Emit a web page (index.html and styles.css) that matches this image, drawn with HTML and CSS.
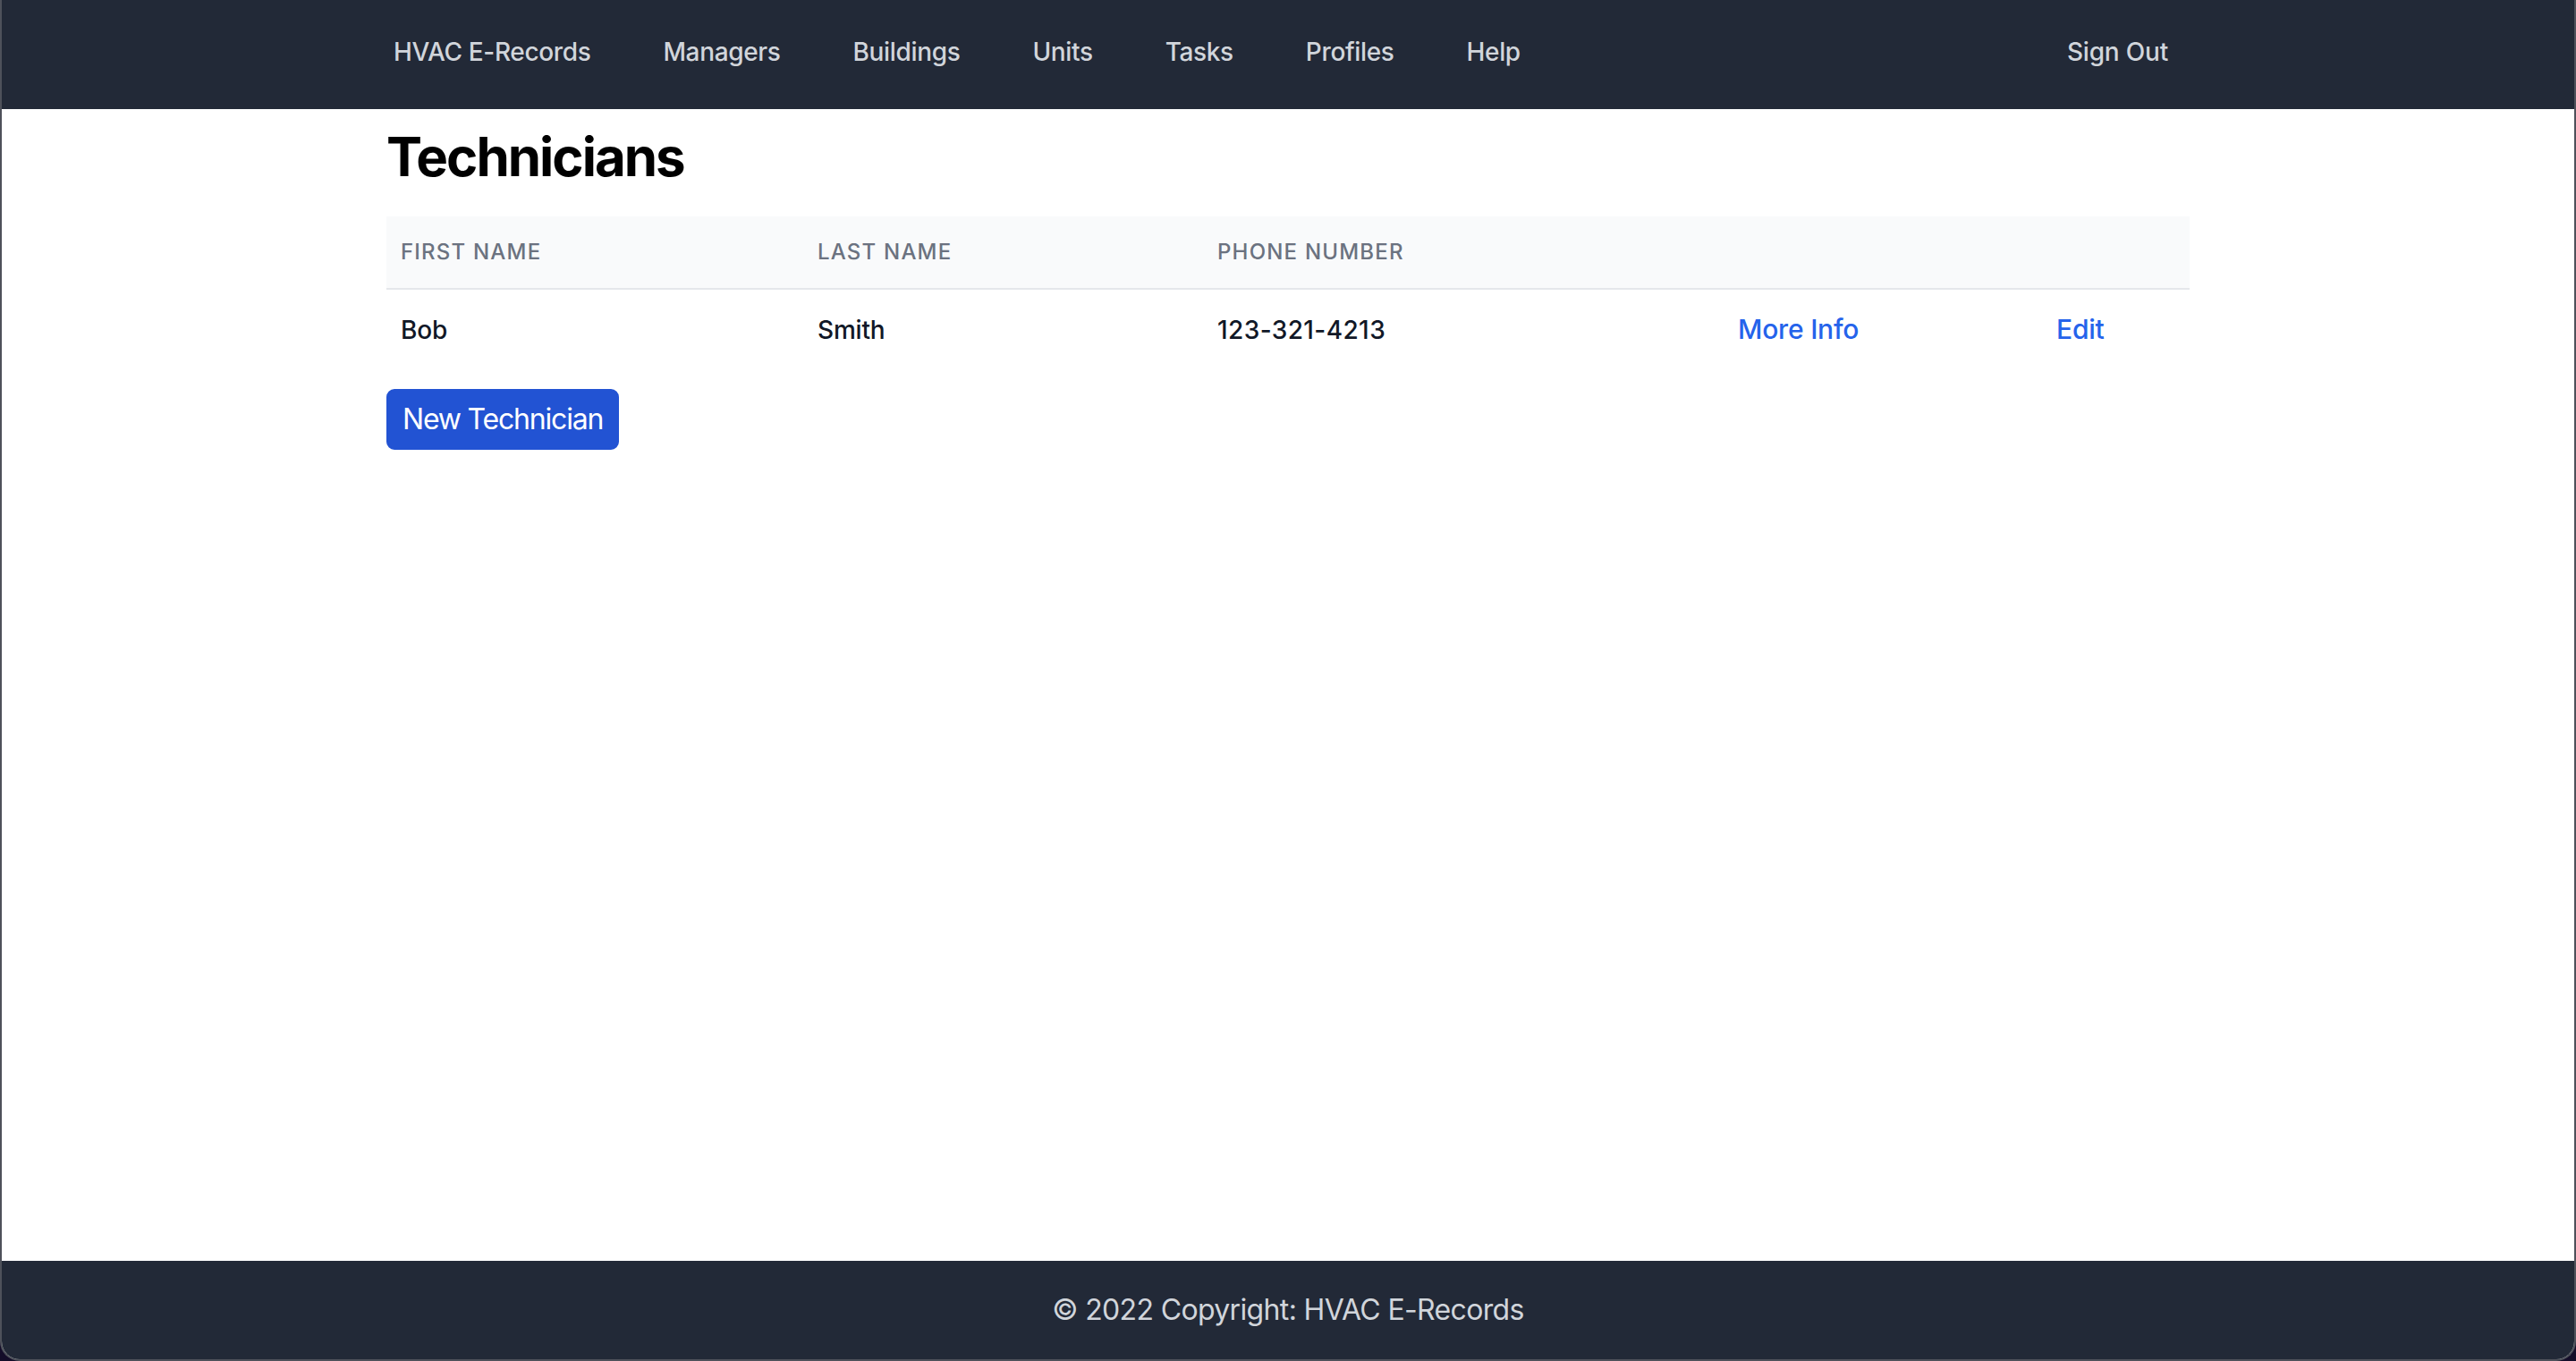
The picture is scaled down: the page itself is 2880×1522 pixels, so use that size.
FILE: index.html
```html
<!DOCTYPE html>
<html lang="en">
<head>
<meta charset="utf-8">
<title>Technicians - HVAC E-Records</title>
<link rel="stylesheet" href="styles.css">
</head>
<body>
<div class="window">
  <nav class="navbar">
    <div class="nav-inner">
      <div class="nav-links">
        <a class="nav-link brand" href="#">HVAC E-Records</a>
        <a class="nav-link" href="#">Managers</a>
        <a class="nav-link" href="#">Buildings</a>
        <a class="nav-link" href="#">Units</a>
        <a class="nav-link" href="#">Tasks</a>
        <a class="nav-link" href="#">Profiles</a>
        <a class="nav-link" href="#">Help</a>
      </div>
      <a class="nav-link signout" href="#">Sign Out</a>
    </div>
  </nav>
  <main class="main">
    <div class="container">
      <h1 class="title">Technicians</h1>
      <table class="table">
        <colgroup>
          <col class="c1"><col class="c2"><col class="c3"><col class="c4"><col class="c5">
        </colgroup>
        <thead>
          <tr>
            <th>First Name</th>
            <th>Last Name</th>
            <th>Phone Number</th>
            <th></th>
            <th></th>
          </tr>
        </thead>
        <tbody>
          <tr>
            <td>Bob</td>
            <td>Smith</td>
            <td class="phone">123-321-4213</td>
            <td><a class="link" href="#">More Info</a></td>
            <td><a class="link" href="#">Edit</a></td>
          </tr>
        </tbody>
      </table>
      <button class="btn" type="button">New Technician</button>
    </div>
  </main>
  <footer class="footer">© 2022 Copyright: HVAC E-Records</footer>
</div>
</body>
</html>
```
FILE: styles.css
```css
* { box-sizing: border-box; }
html, body { margin: 0; padding: 0; height: 100%; }
body {
  background: #140d29;
  font-family: Inter, "Noto Sans", "Liberation Sans", sans-serif;
}
.window {
  height: 1522px;
  display: flex;
  flex-direction: column;
  background: #ffffff;
  border-left: 2px solid #4e515a;
  border-right: 2px solid #4e515a;
  border-bottom: 2px solid #4e515a;
  border-radius: 0 0 22px 22px;
  overflow: hidden;
}
.navbar {
  background: #222937;
  height: 122px;
  flex: none;
}
.nav-inner {
  max-width: 2048px;
  margin: 0 auto;
  padding: 38px 16px 0;
  display: flex;
  justify-content: space-between;
}
.nav-links {
  display: flex;
  gap: 81px;
  padding-left: 8px;
}
.nav-link {
  color: #d1d5db;
  text-decoration: none;
  font-size: 28px;
  line-height: 40px;
  font-weight: 500;
  letter-spacing: -0.35px;
}
.signout { margin-right: 24px; letter-spacing: -0.2px; }
.main { flex: 1; }
.container {
  max-width: 2048px;
  margin: 0 auto;
  padding: 17px 16px 0;
}
.title {
  margin: 0 0 31px;
  font-size: 60px;
  line-height: 72px;
  font-weight: 700;
  color: #000;
  letter-spacing: -2px;
}
.table {
  width: 100%;
  border-collapse: collapse;
  table-layout: fixed;
}
.c1 { width: 466px; }
.c2 { width: 447px; }
.c3 { width: 582px; }
.c4 { width: 356px; }
.c5 { width: 165px; }
.table thead tr {
  background: #f9fafb;
  border-bottom: 2px solid #e5e7eb;
}
.table th {
  text-align: left;
  padding: 24px 16px;
  font-size: 24px;
  line-height: 32px;
  font-weight: 500;
  color: #6b7280;
  text-transform: uppercase;
  letter-spacing: 1.2px;
}
.table td {
  padding: 24px 16px;
  font-size: 28px;
  line-height: 40px;
  font-weight: 500;
  color: #111827;
  letter-spacing: -0.2px;
}
.table td.phone { letter-spacing: 0.4px; }
.link {
  color: #2563eb;
  text-decoration: none;
  font-size: 30px;
  font-weight: 500;
}
.btn {
  margin-top: 22px;
  background: #2253d3;
  border: 2px solid #2253d3;
  border-radius: 9px;
  color: #ffffff;
  font-family: inherit;
  font-size: 32px;
  line-height: 48px;
  padding: 8px 16px;
  letter-spacing: -1.2px;
  cursor: pointer;
}
.footer {
  flex: none;
  background: #222937;
  height: 110px;
  display: flex;
  align-items: center;
  justify-content: center;
  color: #d1d5db;
  font-size: 32px;
  line-height: 48px;
  letter-spacing: -0.65px;
}
```
